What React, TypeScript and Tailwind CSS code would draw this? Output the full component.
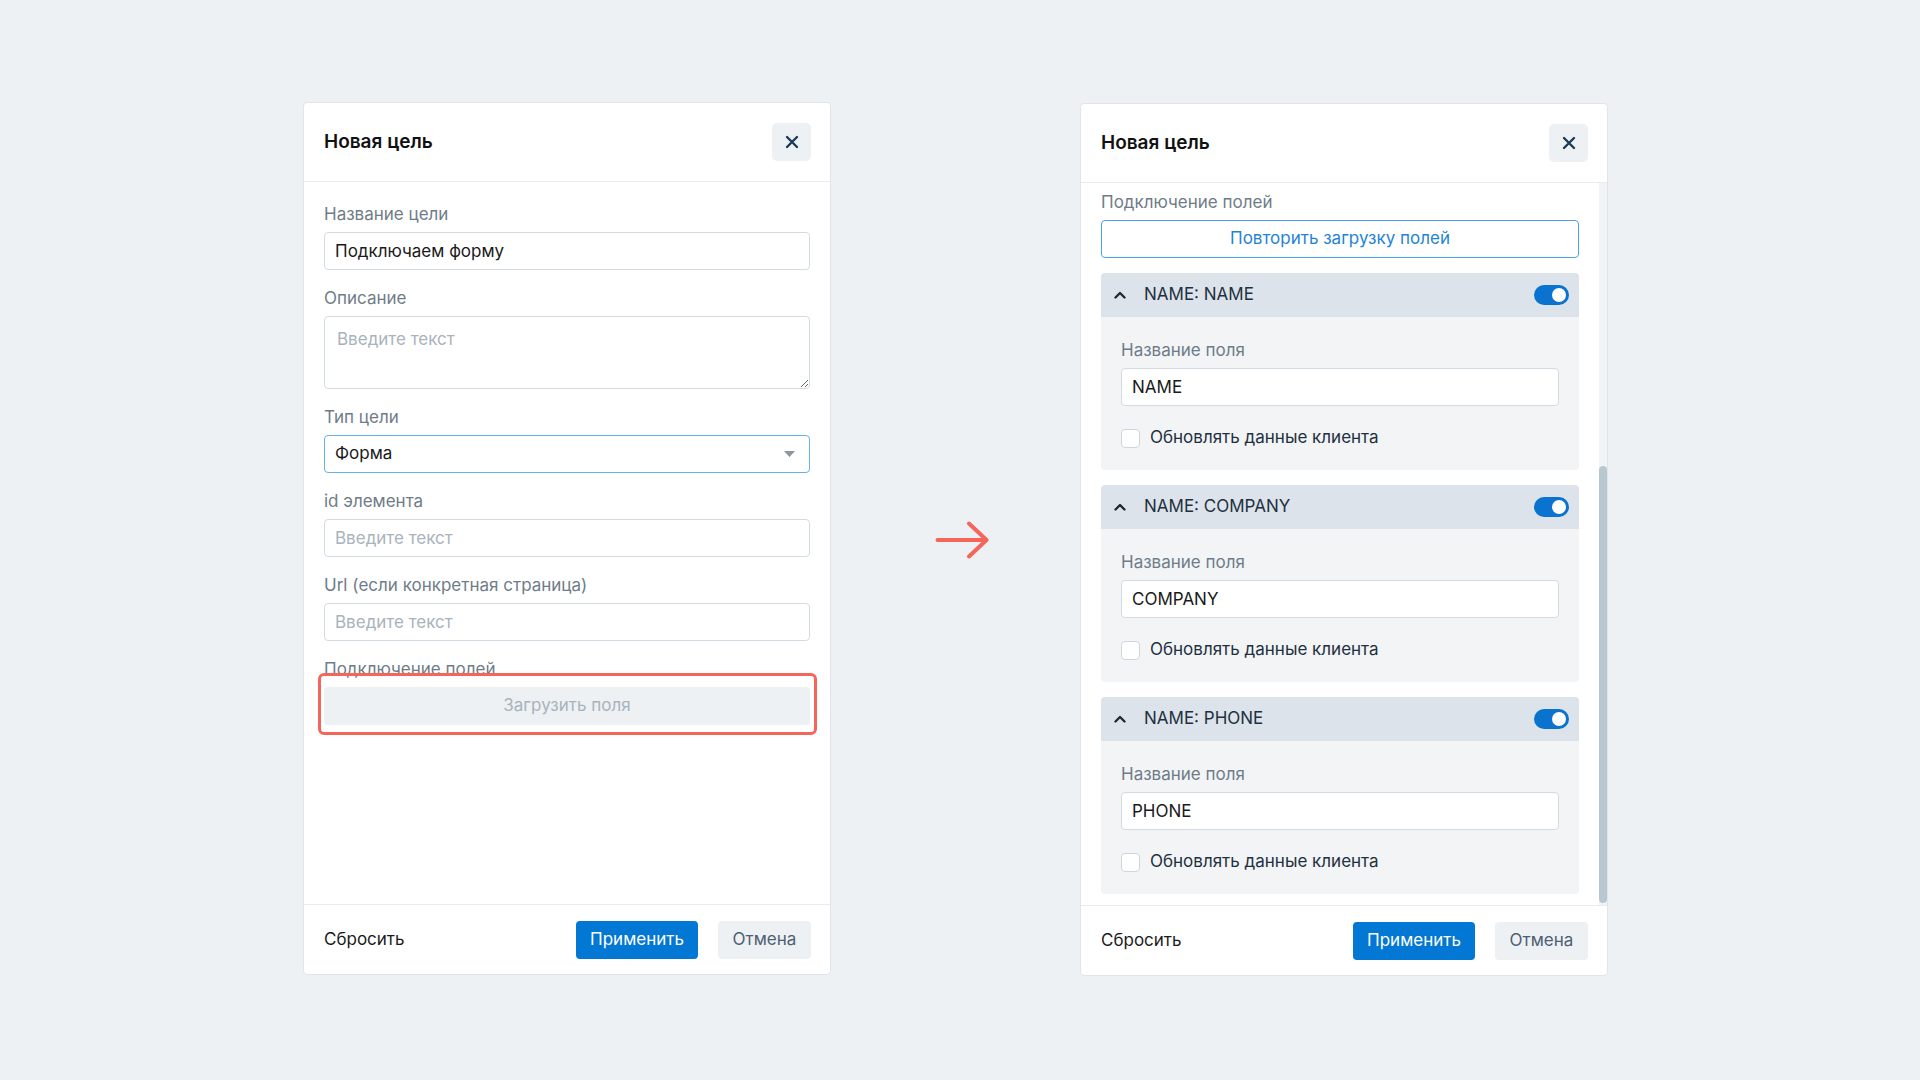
const FONT = { fontFamily: 'Inter, "Noto Sans", "Liberation Sans", sans-serif' }

const FIELDS = ['NAME', 'COMPANY', 'PHONE']

function CloseButton() {
  return (
    <button className="flex h-[38px] w-[39px] items-center justify-center rounded-[5px] bg-[#edf1f4]">
      <svg width="14" height="14" viewBox="0 0 14 14" fill="none" stroke="#1d3a56" strokeWidth={2.4} strokeLinecap="round">
        <path d="M2 2l10 10M12 2L2 12" />
      </svg>
    </button>
  )
}

function Label({ children }: { children: React.ReactNode }) {
  return <div className="mb-1.5 h-6 text-[17px] leading-6 text-[#6f7c88]">{children}</div>
}

function TextInput({ value, placeholder }: { value?: string; placeholder?: string }) {
  return (
    <input
      readOnly
      value={value ?? ''}
      placeholder={placeholder}
      className="h-[38px] w-full rounded-[4px] border border-[#d3dbe2] bg-white px-[10px] text-[17px] text-[#1a1a1a] outline-none placeholder:text-[#a9b3bc]"
    />
  )
}

function Toggle() {
  return (
    <div className="flex h-5 w-[35px] items-center justify-end rounded-full bg-[#0a73d0] pr-[3px]">
      <div className="h-[14px] w-[14px] rounded-full bg-white" />
    </div>
  )
}

function FieldAccordion({ name }: { name: string }) {
  return (
    <div className="mt-[15px]">
      <div className="flex h-11 items-center rounded-t-[4px] bg-[#dce3ea] pl-[13px] pr-[10px]">
        <svg width="12" height="12" viewBox="0 0 12 12" fill="none" stroke="#1b2b3a" strokeWidth={2.4} strokeLinecap="round" strokeLinejoin="round" className="mr-[18px]">
          <path d="M1.5 8.5L6 4l4.5 4.5" />
        </svg>
        <span className="flex-1 text-[17px] text-[#1f3040]">NAME: {name}</span>
        <Toggle />
      </div>
      <div className="rounded-b-[4px] bg-[#f2f4f6] px-5 pt-[21px] pb-5">
        <Label>Название поля</Label>
        <TextInput value={name} />
        <div className="mt-5 flex h-6 items-center gap-[10px]">
          <div className="h-[19px] w-[19px] rounded-[4px] border border-[#cdd6de] bg-white" />
          <span className="text-[17px] text-[#1f3040]">Обновлять данные клиента</span>
        </div>
      </div>
    </div>
  )
}

function Panel({ children, className = '' }: { children: React.ReactNode; className?: string }) {
  return (
    <div className={`flex h-[873px] w-[528px] flex-col rounded-[4px] border border-[#dfe5ea] bg-white ${className}`}>
      <div className="flex h-[79px] shrink-0 items-center justify-between border-b border-[#e8ecef] pl-5 pr-[19px]">
        <h2 className="text-[19px] font-semibold text-[#111]">Новая цель</h2>
        <CloseButton />
      </div>
      {children}
      <div className="flex h-[70px] shrink-0 items-center justify-between border-t border-[#e8ecef] pl-5 pr-[19px]">
        <button className="text-[17px] text-[#1a1a1a]">Сбросить</button>
        <div className="flex gap-5">
          <button className="h-[38px] w-[122px] rounded-[4px] bg-[#0277d4] text-[17px] text-white">Применить</button>
          <button className="h-[38px] w-[93px] rounded-[4px] bg-[#edf1f4] text-[17px] text-[#4d6072]">Отмена</button>
        </div>
      </div>
    </div>
  )
}

export default function App() {
  return (
    <div style={FONT} className="flex min-h-screen w-full items-start bg-[#edf1f4] pl-[303px] pt-[102px]">
      {/* до загрузки полей */}
      <Panel>
        <div className="flex-1 px-5 pt-5">
          <Label>Название цели</Label>
          <TextInput value="Подключаем форму" />

          <div className="mt-4">
            <Label>Описание</Label>
            <textarea
              readOnly
              placeholder="Введите текст"
              className="block h-[73px] w-full resize-y rounded-[4px] border border-[#d3dbe2] bg-white px-3 py-[10px] text-[17px] outline-none placeholder:text-[#a9b3bc]"
            />
          </div>

          <div className="mt-4">
            <Label>Тип цели</Label>
            <div className="flex h-[38px] items-center justify-between rounded-[4px] border border-[#66b0f0] bg-white pl-[10px] pr-[14px] text-[17px] text-[#1a1a1a]">
              <span>Форма</span>
              <svg width="11" height="6" viewBox="0 0 11 6">
                <path d="M0 0h11L5.5 6z" fill="#8c96a0" />
              </svg>
            </div>
          </div>

          <div className="mt-4">
            <Label>id элемента</Label>
            <TextInput placeholder="Введите текст" />
          </div>

          <div className="mt-4">
            <Label>Url (если конкретная страница)</Label>
            <TextInput placeholder="Введите текст" />
          </div>

          <div className="mt-4">
            <Label>Подключение полей</Label>
            <div className="relative">
              <button className="h-[38px] w-full rounded-[4px] bg-[#edf1f4] text-[17px] text-[#a9b3bc]">Загрузить поля</button>
              <div className="pointer-events-none absolute -top-[14px] -bottom-[10px] -left-[6px] -right-[7px] rounded-[6px] border-[3px] border-[#f4665a]" />
            </div>
          </div>
        </div>
      </Panel>

      <div className="flex h-[873px] w-[249px] items-center pl-[104px] pt-[3px]">
        <svg width="54" height="38" viewBox="0 0 54 38" fill="none" stroke="#f4665a" strokeWidth={4} strokeLinecap="round" strokeLinejoin="round">
          <path d="M2.5 19h49M34 2.5L51.5 19 34 35.5" />
        </svg>
      </div>

      {/* после загрузки полей — прокрученный список */}
      <Panel className="mt-px">
        <div className="flex min-h-0 flex-1">
          <div className="min-w-0 flex-1 overflow-hidden px-5 pt-[7px]">
            <Label>Подключение полей</Label>
            <button className="h-[38px] w-full rounded-[4px] border border-[#4aa0ec] bg-white text-[17px] text-[#1f83d8]">
              Повторить загрузку полей
            </button>
            {FIELDS.map((f) => (
              <FieldAccordion key={f} name={f} />
            ))}
          </div>
          <div className="w-2 shrink-0 bg-[#f1f4f6] pt-[283px]">
            <div className="h-[437px] w-2 rounded-full bg-[#b9c7d1]" />
          </div>
        </div>
      </Panel>
    </div>
  )
}
